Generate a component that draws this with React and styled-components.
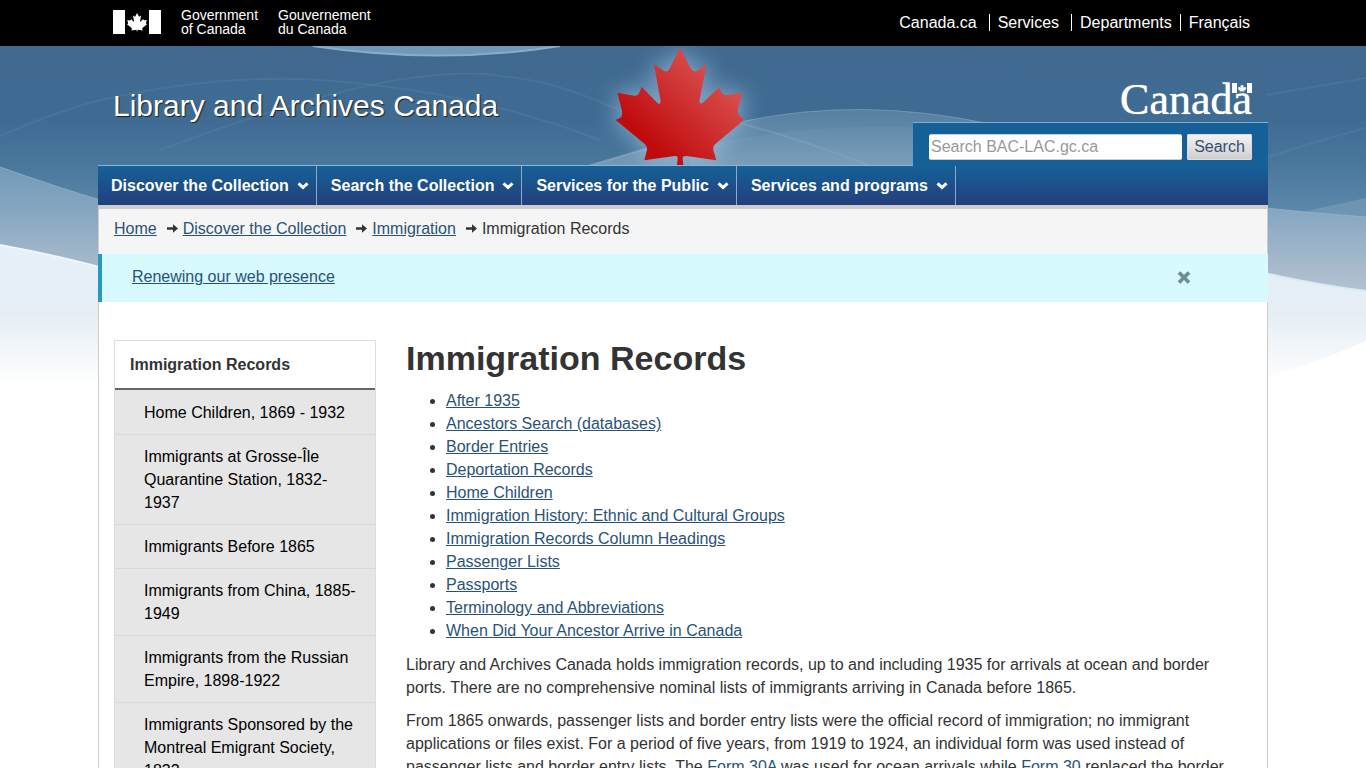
import { useState } from "react";
import styled, { createGlobalStyle, css } from "styled-components";

const GlobalStyle = createGlobalStyle`
  * {
    box-sizing: border-box;
  }

  body {
    margin: 0;
    background: #fff;
    color: #333;
    font-family: "Liberation Sans", Arial, sans-serif;
    font-size: 16px;
    line-height: 23px;
  }
`;

const topLinks = [
  { label: "Canada.ca" },
  { label: "Services" },
  { label: "Departments", tight: true },
  { label: "Français" },
];

const menuItems = [
  "Discover the Collection",
  "Search the Collection",
  "Services for the Public",
  "Services and programs",
];

const breadcrumbs = ["Home", "Discover the Collection", "Immigration"];

const sideLinks = [
  "Home Children, 1869 - 1932",
  "Immigrants at Grosse-Île Quarantine Station, 1832-1937",
  "Immigrants Before 1865",
  "Immigrants from China, 1885-1949",
  "Immigrants from the Russian Empire, 1898-1922",
  "Immigrants Sponsored by the Montreal Emigrant Society, 1832",
];

const topics = [
  "After 1935",
  "Ancestors Search (databases)",
  "Border Entries",
  "Deportation Records",
  "Home Children",
  "Immigration History: Ethnic and Cultural Groups",
  "Immigration Records Column Headings",
  "Passenger Lists",
  "Passports",
  "Terminology and Abbreviations",
  "When Did Your Ancestor Arrive in Canada",
];

const LEAF =
  "M270 24 L302 84 Q311 100 325 91 L350 73 L328 184 Q330 196 340 187 L387 142 L396 160 Q400 167 412 165 L458 158 L444 204 Q442 214 446 225 L462 240 L375 313 Q368 320 370 330 L379 361 L290 348 Q278 347 278 355 L280 376 L261 376 L263 355 Q264 347 254 348 L163 361 L171 330 Q172 320 165 313 L77 240 L94 232 Q98 222 96 212 L82 158 L134 167 Q144 168 147 160 L155 140 L200 187 Q211 198 212 184 L192 73 L222 93 Q232 98 238 87 Z";

const Wrapper = styled.div`
  max-width: 1170px;
  margin: 0 auto;
`;

const TopBar = styled.div`
  background: #000;
`;

const TopBarRow = styled(Wrapper)`
  display: flex;
  justify-content: space-between;
  align-items: center;
  min-height: 46px;
  padding: 0 10px 2px 15px;
`;

const Signature = styled.a`
  display: flex;
  align-items: center;
  gap: 20px;
  color: #fff;
  font-size: 14px;
  line-height: 14px;
  text-decoration: none;

  svg {
    display: block;
  }
`;

const TopLinks = styled.ul`
  display: flex;
  margin: 0;
  padding: 0;
  list-style: none;
`;

const TopLinkItem = styled.li`
  padding: 0 ${(props) => (props.$tight ? "8px" : "12px")} 0 8px;
  line-height: 17px;

  & + & {
    border-left: 1px solid #fff;
  }

  &:last-child {
    padding-right: 8px;
  }

  a {
    color: #fff;
    text-decoration: none;
  }
`;

const Backdrop = styled.svg`
  position: absolute;
  top: 46px;
  left: 0;
  z-index: -1;
  width: 100%;
  height: 354px;
`;

const Banner = styled(Wrapper)`
  display: flex;
  justify-content: space-between;
  align-items: flex-end;
`;

const SiteTitle = styled.a`
  padding: 0 15px 41px;
  color: #fff;
  font-size: 30px;
  line-height: 36px;
  text-decoration: none;
  text-shadow: 1px 1px 1px #222;
`;

const BannerSide = styled.div`
  display: flex;
  flex-direction: column;
  align-items: flex-end;
  padding-top: 32px;
`;

const Wordmark = styled.div`
  position: relative;
  padding-right: 16px;
  color: #fff;
  font-family: "Liberation Serif", "Times New Roman", serif;
  font-size: 44px;
  line-height: 44px;
  text-shadow: 0 0 1px #fff;

  svg {
    position: absolute;
    top: 5px;
    right: 16px;
  }
`;

const SearchForm = styled.form`
  position: relative;
  display: flex;
  gap: 5px;
  width: 355px;
  margin-bottom: -1px;
  padding: 11px 16px 6px;
  border-top: 1px solid #7fb0d3;
  background: #156197;
`;

const SearchInput = styled.input`
  flex: 1;
  min-width: 0;
  height: 26px;
  padding: 0 2px;
  border: 1px solid #ccc;
  border-width: 1px 0 1px 0;
  border-radius: 2px;
  background: #fff;
  color: #333;
  font: 16px "Liberation Sans", Arial, sans-serif;

  &::placeholder {
    color: #999;
    opacity: 1;
  }
`;

const SearchButton = styled.button`
  height: 26px;
  width: 65px;
  padding: 0;
  border: 1px solid #dcdcdc;
  border-radius: 1px;
  background: linear-gradient(#f2f2f2, #cfcfcf);
  color: #335075;
  font: 16px "Liberation Sans", Arial, sans-serif;
`;

const MenuBar = styled(Wrapper)`
  display: flex;
  border-top: 1px solid #8db4d0;
  background: linear-gradient(#156197, #243f7d);
`;

const MenuLink = styled.a`
  display: flex;
  align-items: center;
  gap: 8px;
  padding: 8px 7px 8px 13px;
  border-right: 1px solid #8fa9c6;
  color: #fff;
  font-weight: bold;
  text-decoration: none;

  & + & {
    padding-left: 14px;
  }
`;

const Page = styled(Wrapper)`
  border: 1px solid #ccc;
  border-width: 4px 1px 0;
  background: #fff;
`;

const linkStyle = css`
  color: #295376;
  text-decoration: underline;
`;

const TextLink = styled.a`
  ${linkStyle}
`;

const Breadcrumb = styled.ol`
  display: flex;
  margin: 0;
  padding: 8px 15px 14px;
  background: #f5f5f5;
  list-style: none;

  li {
    display: flex;
    align-items: center;
  }

  svg {
    margin: 0 5px 0 10px;
  }
`;

const Notice = styled.div`
  display: flex;
  justify-content: space-between;
  align-items: center;
  margin: 0 -1px;
  padding: 11px 77px 14px 30px;
  border-left: 4px solid #269abc;
  background: #d7faff;
`;

const CloseButton = styled.button`
  display: flex;
  padding: 0;
  border: 0;
  background: none;
`;

const Columns = styled.div`
  display: grid;
  grid-template-columns: 262px minmax(0, 1fr);
  gap: 30px;
  padding: 38px 14px 0 15px;
`;

const SideNav = styled.nav`
  border: 1px solid #ddd;
  background: #e6e6e6;

  ul {
    margin: 0;
    padding: 0;
    list-style: none;
  }

  li {
    padding: 11px 14px 10px 29px;
  }

  li + li {
    padding-top: 10px;
    border-top: 1px solid #dadada;
  }

  li a {
    color: #000;
    text-decoration: none;
  }
`;

const SideTitle = styled.h2`
  margin: 0;
  padding: 12px 15px;
  border-bottom: 2px solid #666;
  background: #fff;
  font-size: 16px;
  line-height: 23px;
`;

const Article = styled.main`
  h1 {
    margin: 0 0 12px;
    font-size: 34px;
    line-height: 37px;
  }

  ul {
    margin: 0 0 11px;
    padding-left: 40px;
  }

  p {
    margin: 0 0 10px;
  }
`;

const MapleLeaf = ({ x, y, width }) => (
  <svg x={x} y={y} width={width} height={width} viewBox="77 10 385 376">
    <path d={LEAF} fill="#fff" />
  </svg>
);

const Flag = ({ width, height }) => (
  <svg width={width} height={height} viewBox="0 0 48 24" preserveAspectRatio="none" aria-hidden="true">
    <rect width="12" height="24" fill="#fff" />
    <rect x="36" width="12" height="24" fill="#fff" />
    <MapleLeaf x="14" y="2" width="20" />
  </svg>
);

const ChevronIcon = () => (
  <svg width="12" height="9" viewBox="0 0 12 9" aria-hidden="true">
    <path d="M1.5 2.3 L6 6.5 L10.5 2.3" fill="none" stroke="#fff" strokeWidth="3" />
  </svg>
);

const ArrowIcon = () => (
  <svg width="11" height="9" viewBox="0 0 11 9" aria-hidden="true">
    <path d="M0 3.3 H6 V0.3 L11 4.5 L6 8.7 V5.7 H0 Z" fill="#333" />
  </svg>
);

const CloseIcon = () => (
  <svg width="14" height="14" viewBox="0 0 14 14" aria-hidden="true">
    <path d="M2 2.5 L12 12.5 M12 2.5 L2 12.5" stroke="#6f8c90" strokeWidth="3.6" />
  </svg>
);

const HeaderBackdrop = () => (
  <Backdrop viewBox="0 46 1366 354" preserveAspectRatio="xMidYMin slice" aria-hidden="true">
    <defs>
      <linearGradient id="sky" x1="0" y1="0" x2="0" y2="1">
        <stop offset="0" stopColor="#40698f" />
        <stop offset="0.2" stopColor="#3f6b93" />
        <stop offset="0.34" stopColor="#4a779c" />
        <stop offset="0.45" stopColor="#5a86a9" />
        <stop offset="1" stopColor="#a5bbd0" />
      </linearGradient>
      <linearGradient id="mist" gradientUnits="userSpaceOnUse" x1="0" y1="165" x2="0" y2="285">
        <stop offset="0" stopColor="#7299b7" />
        <stop offset="0.35" stopColor="#84a5c0" />
        <stop offset="1" stopColor="#b2c0d0" />
      </linearGradient>
      <linearGradient id="snow" gradientUnits="userSpaceOnUse" x1="0" y1="245" x2="0" y2="385">
        <stop offset="0" stopColor="#e4f0f7" />
        <stop offset="0.5" stopColor="#e6eef4" />
        <stop offset="1" stopColor="#fff" />
      </linearGradient>
      <linearGradient id="hill" gradientUnits="userSpaceOnUse" x1="0" y1="100" x2="0" y2="170">
        <stop offset="0" stopColor="#8fb1ca" stopOpacity="0.25" />
        <stop offset="1" stopColor="#a2bdd0" stopOpacity="0.5" />
      </linearGradient>
      <linearGradient id="leafRed" x1="0" y1="0.9" x2="0.9" y2="0">
        <stop offset="0.2" stopColor="#c00b0d" />
        <stop offset="1" stopColor="#e0625e" />
      </linearGradient>
      <filter id="glow" x="-40%" y="-40%" width="180%" height="180%">
        <feGaussianBlur stdDeviation="32" />
      </filter>
    </defs>
    <rect y="46" width="1366" height="354" fill="url(#sky)" />

    <path d="M313 46 Q440 65 560 46 Z" fill="#7099b8" />
    <path d="M313 46 Q440 65 560 46" fill="none" stroke="#86aeca" strokeWidth="2" />
    <g fill="none" stroke="#7da3c0" strokeOpacity="0.16" strokeWidth="2">
      <path d="M0 136 Q70 106 110 98 Q220 74 320 80 Q470 90 600 140" />
      <path d="M160 150 Q400 60 500 76 Q560 80 640 120" />
      <path d="M1266 95 L1366 78 M1266 158 Q1320 140 1366 128" strokeOpacity="0.15" />
    </g>

    <path d="M540 180 Q640 148 740 122 Q860 96 990 124 L1100 180 Z" fill="url(#hill)" />
    <path d="M590 166 Q660 145 740 122 Q860 96 990 124" fill="none" stroke="#8fb1ca" strokeOpacity="0.5" />
    <path d="M690 150 Q790 122 930 128 L1000 180 H690 Z" fill="url(#hill)" fillOpacity="0.3" />
    <path d="M740 123 Q820 145 880 170" fill="none" stroke="#8fb1ca" strokeOpacity="0.3" strokeWidth="2" />

    <path d="M0 167 Q50 185 110 203 L110 290 L0 290 Z" fill="url(#mist)" />
    <path d="M0 167 Q50 185 110 203" fill="none" stroke="#84acc9" />
    <path d="M1256 223 Q1310 210 1366 198 V310 H1256 Z" fill="#8eabc3" fillOpacity="0.4" />
    <path d="M1256 207 Q1310 213 1366 217 V310 H1256 Z" fill="url(#mist)" />
    <path d="M1256 207 Q1310 213 1366 217" fill="none" stroke="#9dbdd3" strokeOpacity="0.6" />
    <path d="M0 245 Q60 256 110 270 H1256 Q1310 284 1366 291 V400 H0 Z" fill="url(#snow)" />
    <path d="M0 245 Q60 256 110 270" fill="none" stroke="#ecf6fb" strokeWidth="2" />
    <path d="M1256 271 Q1310 284 1366 291" fill="none" stroke="#d9ecf5" strokeWidth="2" />
    <path d="M1256 380 Q1320 362 1366 341 V400 H1256 Z" fill="#fff" />

    <g transform="translate(590 40) scale(0.3333)">
      <path d={LEAF} fill="#b9d9f0" stroke="#b9d9f0" strokeWidth="16" filter="url(#glow)" opacity="0.5" />
      <path d={LEAF} fill="url(#leafRed)" />
    </g>
  </Backdrop>
);

export default function App() {
  const [noticeOpen, setNoticeOpen] = useState(true);

  return (
    <>
      <GlobalStyle />
      <TopBar>
        <TopBarRow>
          <Signature href="#canada">
            <Flag width={48} height={24} />
            <span>
              Government
              <br />
              of Canada
            </span>
            <span lang="fr">
              Gouvernement
              <br />
              du Canada
            </span>
          </Signature>
          <TopLinks>
            {topLinks.map(({ label, tight }) => (
              <TopLinkItem key={label} $tight={tight}>
                <a href="#top">{label}</a>
              </TopLinkItem>
            ))}
          </TopLinks>
        </TopBarRow>
      </TopBar>

      <header>
        <HeaderBackdrop />
        <Banner>
          <SiteTitle href="#home">Library and Archives Canada</SiteTitle>
          <BannerSide>
            <Wordmark>
              Canada
              <Flag width={20} height={10} />
            </Wordmark>
            <SearchForm role="search" onSubmit={(e) => e.preventDefault()}>
              <SearchInput type="search" aria-label="Search BAC-LAC.gc.ca" placeholder="Search BAC-LAC.gc.ca" />
              <SearchButton type="submit">Search</SearchButton>
            </SearchForm>
          </BannerSide>
        </Banner>
        <MenuBar as="nav">
          {menuItems.map((item) => (
            <MenuLink key={item} href="#menu">
              {item}
              <ChevronIcon />
            </MenuLink>
          ))}
        </MenuBar>
      </header>

      <Page>
        <Breadcrumb>
          {breadcrumbs.map((crumb) => (
            <li key={crumb}>
              <TextLink href="#crumb">{crumb}</TextLink>
              <ArrowIcon />
            </li>
          ))}
          <li>Immigration Records</li>
        </Breadcrumb>

        {noticeOpen && (
          <Notice>
            <TextLink href="#renewing">Renewing our web presence</TextLink>
            <CloseButton type="button" aria-label="Close" onClick={() => setNoticeOpen(false)}>
              <CloseIcon />
            </CloseButton>
          </Notice>
        )}

        <Columns>
          <SideNav>
            <SideTitle>Immigration Records</SideTitle>
            <ul>
              {sideLinks.map((link) => (
                <li key={link}>
                  <a href="#section">{link}</a>
                </li>
              ))}
            </ul>
          </SideNav>
          <Article>
            <h1>Immigration Records</h1>
            <ul>
              {topics.map((topic) => (
                <li key={topic}>
                  <TextLink href="#topic">{topic}</TextLink>
                </li>
              ))}
            </ul>
            <p>
              Library and Archives Canada holds immigration records, up to and including 1935 for arrivals at ocean and
              border ports. There are no comprehensive nominal lists of immigrants arriving in Canada before 1865.
            </p>
            <p>
              From 1865 onwards, passenger lists and border entry lists were the official record of immigration; no
              immigrant applications or files exist. For a period of five years, from 1919 to 1924, an individual form
              was used instead of passenger lists and border entry lists. The{" "}
              <TextLink href="#form-30a">Form 30A</TextLink> was used for ocean arrivals while{" "}
              <TextLink href="#form-30">Form 30</TextLink> replaced the border
            </p>
          </Article>
        </Columns>
      </Page>
    </>
  );
}
